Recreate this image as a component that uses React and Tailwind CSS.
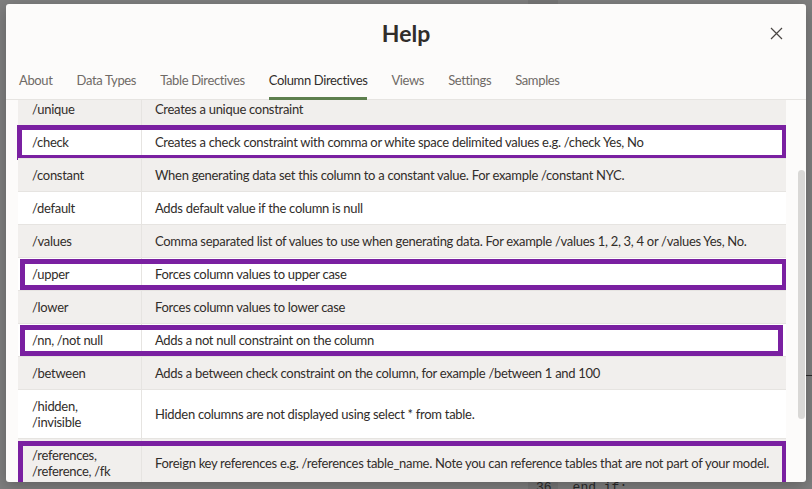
import React from "react";

const rows = [
  { k: ["/unique"], d: "Creates a unique constraint" },
  { k: ["/check"], d: "Creates a check constraint with comma or white space delimited values e.g. /check Yes, No", hl: "-left-[1px] -right-[1px] -top-[1px] -bottom-[2px]" },
  { k: ["/constant"], d: "When generating data set this column to a constant value. For example /constant NYC." },
  { k: ["/default"], d: "Adds default value if the column is null" },
  { k: ["/values"], d: "Comma separated list of values to use when generating data. For example /values 1, 2, 3, 4 or /values Yes, No." },
  { k: ["/upper"], d: "Forces column values to upper case", hl: "left-[2px] -right-[1px] top-[1px] bottom-0" },
  { k: ["/lower"], d: "Forces column values to lower case" },
  { k: ["/nn, /not null"], d: "Adds a not null constraint on the column", hl: "left-[2px] right-[3px] top-[1px] bottom-0" },
  { k: ["/between"], d: "Adds a between check constraint on the column, for example /between 1 and 100" },
  { k: ["/hidden,", "/invisible"], d: "Hidden columns are not displayed using select * from table." },
  { k: ["/references,", "/reference, /fk"], d: "Foreign key references e.g. /references table_name. Note you can reference tables that are not part of your model.", hl: "left-0 -right-[1px] top-[2px] -bottom-[4px]" },
];

const tabs = ["About", "Data Types", "Table Directives", "Column Directives", "Views", "Settings", "Samples"];

export default function App() {
  return (
    <div
      className="relative w-[812px] h-[489px] overflow-hidden bg-[#7f7f7f]"
      style={{ fontFamily: "Lato, 'Open Sans', sans-serif" }}
    >
      {/* underlying editor behind the modal */}
      <div className="absolute left-[528px] top-0 w-[30px] h-full bg-[#777777]" />
      <div
        className="absolute left-[536px] top-[480px] text-[13px] leading-[16px] text-[#2a2a2a]"
        style={{ fontFamily: "'Liberation Mono', monospace" }}
      >
        36
      </div>
      <div
        className="absolute left-[557px] top-[480px] text-[13px] leading-[16px] text-[#2a2a2a]"
        style={{ fontFamily: "'Liberation Mono', monospace" }}
      >
        &nbsp;&nbsp;end if;
      </div>
      <div className="absolute left-[806px] top-[375px] w-[6px] h-[1px] bg-[#2a2a2a]" />

      {/* dialog */}
      <div className="relative ml-[6px] mt-[4px] w-[800px] h-[478px] bg-[#fcfbfa] rounded-[3px] flex flex-col overflow-hidden shadow-[0_4px_16px_rgba(0,0,0,0.25)]">
        {/* header */}
        <div className="h-[58px] grid grid-cols-[1fr_auto_1fr] items-center">
          <div />
          <div className="text-[23px] font-bold text-[#312d2a] leading-none">Help</div>
          <div className="flex justify-end pr-[23px]">
            <svg width="13" height="13" viewBox="0 0 13 13" fill="none">
              <path d="M1 1L12 12M12 1L1 12" stroke="#4a4643" strokeWidth="1.2" />
            </svg>
          </div>
        </div>

        {/* tabs */}
        <div className="h-[38px] flex gap-[24px] pl-[13px] border-b border-[#e6e4e1]">
          {tabs.map((t) => {
            const active = t === "Column Directives";
            return (
              <div key={t} className="relative flex items-center pt-[1px]">
                <span
                  className={
                    active
                      ? "text-[13px] tracking-[-0.36px] text-[#312d2a]"
                      : "text-[13px] tracking-[-0.36px] text-[#6f6a66]"
                  }
                >
                  {t}
                </span>
                {active && <div className="absolute left-0 right-0 bottom-[-1px] h-[3px] bg-[#5d7f4e]" />}
              </div>
            );
          })}
        </div>

        {/* content */}
        <div className="flex-1 flex overflow-hidden">
          <div className="pl-[12px] w-[780px] overflow-hidden">
            <div className="-mt-[8px] w-[768px]">
              {rows.map((r, i) => (
                <div
                  key={i}
                  className={
                    (i % 2 === 0 ? "bg-[#f1efed]" : "bg-white") +
                    " relative grid grid-cols-[124px_1fr] border-t border-[#e6e4e1] text-[13px] leading-[16px] tracking-[-0.29px] text-[#312d2a]"
                  }
                >
                  <div className="pl-[14px] pr-[6px] py-[8px] border-r border-[#e6e4e1]">
                    {r.k.map((line, j) => (
                      <div key={j} className="whitespace-nowrap">{line}</div>
                    ))}
                  </div>
                  <div className="px-[13px] py-[8px] flex items-center whitespace-nowrap">{r.d}</div>
                  {r.hl && (
                    <div className={"absolute border-[5px] border-[#7a20a1] " + r.hl} />
                  )}
                </div>
              ))}
            </div>
          </div>
          <div className="w-[20px] flex justify-end pr-[1px]">
            <div className="mt-[70px] w-[7px] h-[249px] rounded-full bg-[#d9d8d6]" />
          </div>
        </div>
      </div>
    </div>
  );
}
